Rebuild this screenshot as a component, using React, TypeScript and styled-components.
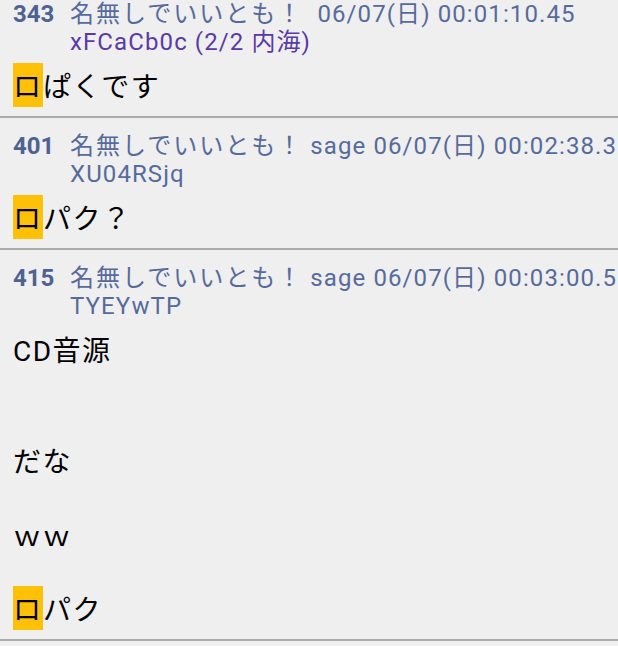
import styled, { createGlobalStyle } from 'styled-components';

const GlobalStyle = createGlobalStyle`
  html, body {
    margin: 0;
    padding: 0;
    background: #efefef;
  }
  body {
    font-family: Roboto, "Noto Sans CJK JP", sans-serif;
  }
`;

const Screen = styled.div`
  width: 618px;
  height: 646px;
  overflow: hidden;
  background: #efefef;
`;

// scrolled a little past the top of the first post
const ThreadList = styled.div`
  margin-top: -14px;
`;

const Post = styled.article`
  padding: 14px 0 10px 13px;
  border-bottom: 2px solid #ababab;
`;

const Head = styled.div`
  display: flex;
  column-gap: 17px;
  font-size: 24px;
  line-height: 28px;
  color: #566b9c;
`;

const PostNo = styled.span`
  flex: none;
  width: 40px;
  font-weight: 700;
  color: #4e6292;
`;

const Meta = styled.div`
  flex: 1;
  min-width: 0;
`;

const MetaLine = styled.div<{ $purple?: boolean }>`
  white-space: pre;
  overflow: hidden;
  letter-spacing: 1.1px;
  color: ${p => (p.$purple ? '#5a3aa5' : 'inherit')};
`;

const Name = styled.span`
  font-family: "Noto Sans CJK JP", sans-serif;
  font-size: 24px;
  line-height: 1;
  letter-spacing: 2px;
`;

const Body = styled.div`
  margin-top: 13px;
  font-size: 28px;
  line-height: 37px;
  letter-spacing: 1.5px;
  color: #000;
  white-space: pre;
`;

const Hit = styled.span`
  font-family: "Noto Sans CJK JP", sans-serif;
  line-height: 1;
  letter-spacing: 2px;
  padding: 2px 0;
  background: #ffc107;
`;

type Piece = string | { hit: string };

type PostData = {
  no: number;
  name: string;
  mail: string;
  date: string;
  id: string;
  idHot?: boolean;
  body: Piece[];
};

const posts: PostData[] = [
  {
    no: 343,
    name: '名無しでいいとも！',
    mail: '',
    date: '06/07(日) 00:01:10.45',
    id: 'xFCaCb0c (2/2 内海)',
    idHot: true,
    body: [{ hit: 'ロ' }, 'ぱくです'],
  },
  {
    no: 401,
    name: '名無しでいいとも！',
    mail: 'sage',
    date: '06/07(日) 00:02:38.3',
    id: 'XU04RSjq',
    body: [{ hit: 'ロ' }, 'パク？'],
  },
  {
    no: 415,
    name: '名無しでいいとも！',
    mail: 'sage',
    date: '06/07(日) 00:03:00.5',
    id: 'TYEYwTP',
    body: ['CD音源\n\n\nだな\n\nｗｗ\n\n', { hit: 'ロ' }, 'パク'],
  },
];

export default function App() {
  return (
    <Screen>
      <GlobalStyle />
      <ThreadList>
        {posts.map(p => (
          <Post key={p.no}>
            <Head>
              <PostNo>{p.no}</PostNo>
              <Meta>
                <MetaLine>
                  <Name>{p.name}</Name>
                  {' ' + p.mail + ' ' + p.date}
                </MetaLine>
                <MetaLine $purple={p.idHot}>{p.id}</MetaLine>
              </Meta>
            </Head>
            <Body>
              {p.body.map((piece, i) =>
                typeof piece === 'string' ? (
                  <span key={i}>{piece}</span>
                ) : (
                  <Hit key={i}>{piece.hit}</Hit>
                )
              )}
            </Body>
          </Post>
        ))}
      </ThreadList>
    </Screen>
  );
}
